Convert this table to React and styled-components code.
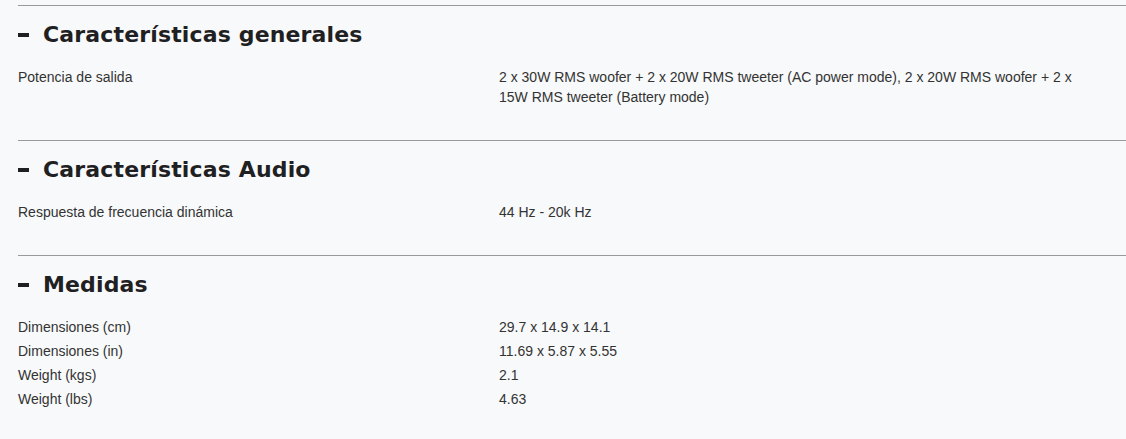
import React from "react";
import styled, { createGlobalStyle } from "styled-components";

const Global = createGlobalStyle`
  html, body { margin: 0; padding: 0; background: #f8f9fa; }
  body { font-family: "Liberation Sans", Arial, sans-serif; color: #333; }
`;

const Page = styled.div`
  padding: 5px 0 0 18px;
  background: #f8f9fa;
  min-height: 439px;
  box-sizing: border-box;
`;

const Section = styled.section`
  border-top: 1px solid #9a9a9a;
  padding: 14px 0 33px;
`;

const Heading = styled.h2`
  margin: 0 0 17px;
  font-family: "DejaVu Sans", "Inter", sans-serif;
  font-weight: 700;
  font-size: 22px;
  line-height: 30px;
  letter-spacing: 0.15px;
  color: #1f2022;
`;

const Toggle = styled.span`
  display: inline-block;
  width: 11px;
  height: 4px;
  margin: 0 14px 5px 0;
  background: #1f2022;
`;

const Rows = styled.div`
  display: flex;
  flex-direction: column;
  gap: 4px;
`;

const Row = styled.div`
  display: grid;
  grid-template-columns: 481px 600px;
  font-size: 14px;
  line-height: 20px;
  color: #333;
`;

const Label = styled.div``;
const Value = styled.div``;

const data = [
  {
    title: "Características generales",
    rows: [
      [
        "Potencia de salida",
        "2 x 30W RMS woofer + 2 x 20W RMS tweeter (AC power mode), 2 x 20W RMS woofer + 2 x 15W RMS tweeter (Battery mode)",
      ],
    ],
  },
  {
    title: "Características Audio",
    rows: [["Respuesta de frecuencia dinámica", "44 Hz - 20k Hz"]],
  },
  {
    title: "Medidas",
    rows: [
      ["Dimensiones (cm)", "29.7 x 14.9 x 14.1"],
      ["Dimensiones (in)", "11.69 x 5.87 x 5.55"],
      ["Weight (kgs)", "2.1"],
      ["Weight (lbs)", "4.63"],
    ],
  },
];

export default function App() {
  return (
    <Page>
      <Global />
      {data.map((s) => (
        <Section key={s.title}>
          <Heading>
            <Toggle aria-label="Contraer" />
            {s.title}
          </Heading>
          <Rows>
            {s.rows.map(([l, v]) => (
              <Row key={l}>
                <Label>{l}</Label>
                <Value>{v}</Value>
              </Row>
            ))}
          </Rows>
        </Section>
      ))}
    </Page>
  );
}
